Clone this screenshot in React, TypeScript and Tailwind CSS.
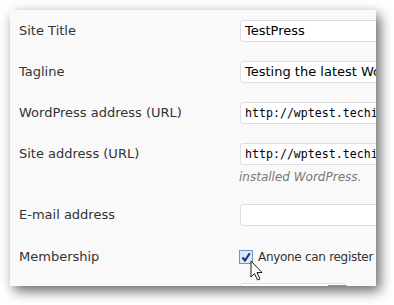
import React from "react";

const label = "w-[221px] shrink-0 text-[13px] leading-[22px] text-[#333]";
const box =
  "h-[22px] w-[200px] shrink-0 rounded-[3px] border border-[#dfdfdf] bg-white px-[4px] text-black whitespace-nowrap overflow-hidden";

function Row({ name, children, h = "h-[41px]" }: { name: string; children: React.ReactNode; h?: string }) {
  return (
    <div className={`flex items-start ${h}`}>
      <div className={label}>{name}</div>
      <div className="flex flex-col">{children}</div>
    </div>
  );
}

export default function App() {
  const mono = { fontFamily: '"DejaVu Sans Mono", monospace' };
  return (
    <div className="w-[394px] h-[305px] bg-white overflow-hidden pt-[10px] pl-[10px]" style={{ fontFamily: '"DejaVu Sans", Verdana, sans-serif' }}>
      <div className="relative w-[366px] h-[276px] bg-[#f9f9f9] overflow-hidden pt-[10px] pl-[9px] shadow-[4px_5px_12px_rgba(0,0,0,0.6)]">
        <Row name="Site Title">
          <div className={`${box} text-[13px] leading-[20px]`}>TestPress</div>
        </Row>
        <Row name="Tagline">
          <div className={`${box} text-[13px] leading-[20px]`}>Testing the latest WordPress</div>
        </Row>
        <Row name="WordPress address (URL)">
          <div className={`${box} text-[11.6px] leading-[20px]`} style={mono}>http://wptest.techinfo</div>
        </Row>
        <Row name="Site address (URL)" h="h-[61px]">
          <div className={`${box} text-[11.6px] leading-[20px]`} style={mono}>http://wptest.techinfo</div>
          <div className="mt-[5px] -ml-[1px] text-[12px] italic leading-[15px] text-[#777] whitespace-nowrap">installed WordPress.</div>
        </Row>
        <Row name="E-mail address" h="h-[42px]">
          <div className={`${box} text-[13px] leading-[20px]`}></div>
        </Row>
        <Row name="Membership" h="h-[37px]">
          <div className="flex items-center gap-[5px] mt-[1px] -ml-[1px]">
            <span className="flex h-[14px] w-[14px] items-center justify-center border border-[#6f94c0] bg-[#dbe8f7]">
              <svg width="10" height="10" viewBox="0 0 10 10">
                <path d="M1.5 5.5 L4 8.5 L8.8 1.2" fill="none" stroke="#1a2a7a" strokeWidth="2" />
              </svg>
            </span>
            <span className="text-[12px] tracking-[-0.3px] leading-[20px] text-[#333] whitespace-nowrap">Anyone can register</span>
          </div>
        </Row>
        <div className="flex">
          <div className="w-[221px] shrink-0" />
          <div className="flex h-[22px] w-[107px] rounded-[3px] border border-[#dfdfdf] bg-white">
            <div className="flex-1" />
            <div className="w-[18px] bg-[#8c8c8c] mt-[1px]" />
          </div>
        </div>
        <svg className="absolute left-[240px] top-[250px]" width="14" height="22" viewBox="0 0 14 22">
          <path d="M1 1 L1 17 L4.5 13.5 L7.5 20 L10 19 L7 12.5 L12 12.5 Z" fill="white" stroke="#1b1b1b" strokeWidth="1" strokeLinejoin="round" />
        </svg>
      </div>
    </div>
  );
}
